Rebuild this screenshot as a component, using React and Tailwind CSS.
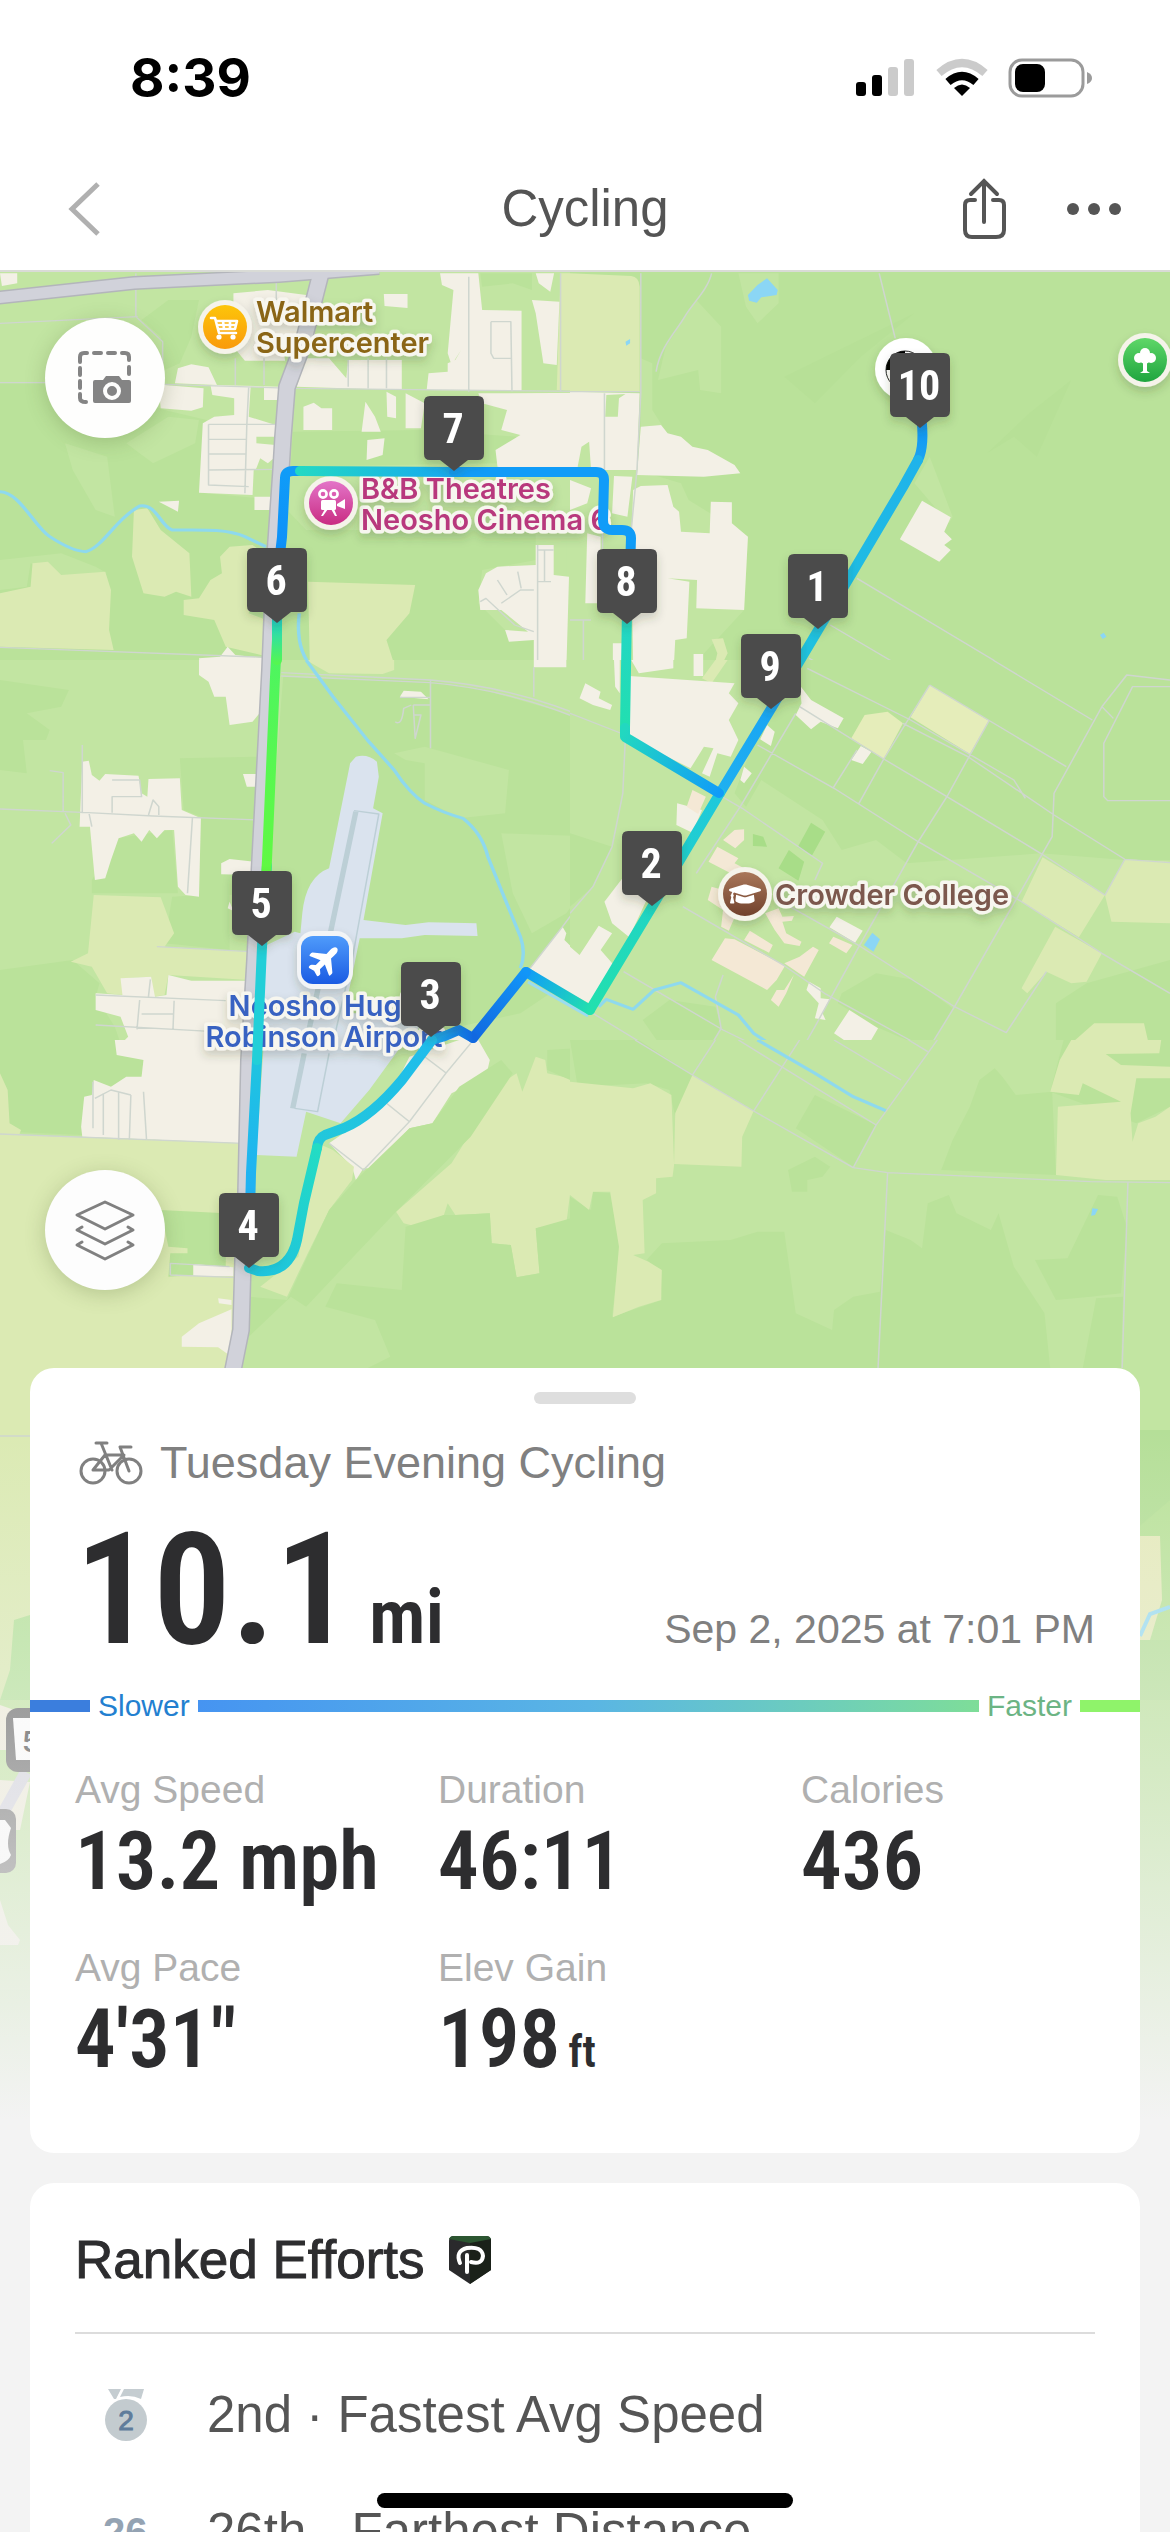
import { FaGraduationCap } from "react-icons/fa";
import { IoAirplane } from "react-icons/io5";

const NARROW = "font-['Roboto_Condensed','Arial_Narrow','Liberation_Sans',sans-serif]";

// Each tile covers 600x400 of the map and keeps its own 1568x1200 grid.
const tiles = [
  {
    x: 0,
    y: 270,
    base: "#c2e5a2",
    shapes: [
      ["#bae29a", "M0 340H240L430 420L540 450L525 668L725 690L800 780H1400V870L1260 900L1250 1000L1320 1080L1400 1110V1200H0Z"],
      ["#bae29a", "M765 485L1100 480L1350 500L1300 580L760 590ZM370 150L440 90L520 90L500 200L470 280L430 300L420 200ZM1255 10H1390V60L1340 40L1260 50Z"],
      ["#c2e5a2", "M170 520L280 560L300 740L250 720L190 600ZM440 440L520 450L510 520L400 580L330 520ZM0 870L160 850L250 890L280 910L160 920L80 880L70 950L0 960ZM1480 800H1568V1200H1480Z"],
      ["#dbeab3", "M0 970L80 950L85 880L125 875L160 915L275 905L290 960L285 1080L297 1140L0 1130ZM350 720L385 715L420 780L495 850L500 980L460 965L430 980L375 970L345 860ZM575 860L600 830L660 825L690 850L650 1030L720 1060L700 1160L590 1130L560 1050L480 1035V990L520 985L550 930L580 910ZM805 935L1085 945L1070 1030L1010 1110L1035 1200H810ZM1465 10H1568V365L1455 360Z"],
      ["#f3f0e6", "M0 10H45V40L5 48ZM610 70L700 60L800 75L830 100L820 220L740 230L745 272H640L610 230ZM457 340L465 295L500 283L545 292L567 345ZM415 355L430 345L532 355L530 412L500 422L420 415ZM550 345L730 350V390H690V350H655L650 440L720 465V500L670 500V520L720 525V560L700 580L680 565L670 595L663 600L660 675L520 668L530 460L560 440L612 435V385L555 375ZM665 680H720V720H665ZM415 695L468 692L465 725ZM793 410L820 398L840 415H868V480H793ZM955 395L980 440L995 485H945ZM960 510L1005 505L1000 555L958 570ZM775 350L800 265H860L905 325L910 270H1050V360ZM1003 72H1065V114L1005 108Z"],
      ["#f3f0e6", "M1150 10H1250L1260 120L1363 122V362L1115 360L1120 310L1170 305V280L1190 270L1205 240L1180 285L1170 250L1185 60L1155 45ZM1390 90L1462 95L1455 285L1420 280L1400 130ZM1400 10H1448L1438 65L1408 40ZM1060 370L1110 400L1100 475L1060 475ZM1250 370L1568 368V620L1540 590L1540 520L1510 560L1520 620L1300 590L1295 540L1360 495L1310 480L1325 420L1260 400ZM1010 365L1035 380V445L1012 440ZM1400 825H1447V915L1487 920L1480 1200H1395V1110L1330 1115L1320 1080L1380 1085L1310 1020L1255 1020L1250 960L1270 910L1300 890L1400 885ZM1545 785H1568V1000L1530 995ZM520 1165L575 1160L595 1130L615 1155L695 1165V1200H525Z"],
    ],
    roads: "M0 160L360 140M355 10V140L425 215V345M0 338H240M430 343L770 355L1568 365M545 463H727M545 463V645L650 650M543 508H645M543 552H645M545 600L720 598M645 465L640 670M650 350L645 465M1225 20V365M1283 155H1335L1338 365M1335 265H1290L1283 250V155M962 265V355M1010 265V355M910 270V350M615 265V345M690 265V345M1405 825V1200M1423 840V935M1405 840H1447M1405 935H1440M1310 1000L1360 960H1395M1300 930L1325 975M1353 905L1362 955M1255 995L1270 985L1345 1065L1395 1085M0 1132L695 1162M722 30V90M1465 10V365",
    river: "M0 665C50 665 90 770 130 800S200 845 225 845C270 830 300 750 365 708C410 700 420 770 450 780C520 780 590 775 640 800L695 830M782 1030C775 1100 785 1160 822 1200",
  },
  {
    x: 570,
    y: 270,
    base: "#bae29a",
    shapes: [
      ["#c2e5a2", "M185 265L215 280V420L240 465L185 470ZM250 230L330 90L395 170V370L340 360L335 300L230 330ZM440 10H545V100L490 160L460 110ZM0 600H175L290 640L310 690L465 800L455 1020L310 1200H0ZM900 640L940 560L1000 740L990 760Z"],
      ["#b7e097", "M1090 550L1200 430L1310 330L1220 560L1160 500ZM560 320L720 230L900 130L760 260L640 400Z"],
      ["#dbeab3", "M0 10L160 18Q180 20 182 50V365H0ZM370 1108L400 1105L412 1150L390 1200H375L385 1150Z"],
      ["#f3f0e6", "M0 365L182 370L175 600H90L0 595ZM185 470L238 465L255 490L290 500L320 530L360 540L430 585L445 610L350 620L175 615ZM115 618L163 620L150 740L110 730ZM0 630L55 655L45 700L0 720ZM185 648L255 645L270 710L285 725L290 785L365 790L368 695L423 697V760L465 800L455 1020L330 1015L332 930L255 925L312 935L305 1105L275 1110L272 1175H165L160 840L165 660ZM45 790L80 800V1000H40ZM920 692L995 742L978 785L998 808L978 825L995 840L965 875L862 808ZM323 1152H348V1200H323ZM112 1120H152V1200H112Z"],
      ["#c2e5a2", "M95 375L145 372L128 385L125 440H92ZM20 590L30 530L50 515L55 600Z"],
      ["#8bd6f5", "M465 75L490 45L515 25L543 60L540 75L500 82L488 98L468 92ZM145 215L157 207V220L147 227ZM1385 1095L1395 1088L1402 1100L1392 1107Z"],
    ],
    roads: "M185 10V370L175 600L160 780M370 10C360 60 320 100 300 140S235 230 225 305M808 10L850 205M750 925L1150 1200M680 1065L880 1200M0 365H182M90 370V600M625 1165L680 1200M35 1050V1200M0 1050H55M85 790V1000",
    river: "",
  },
  {
    x: 0,
    y: 660,
    base: "#c2e5a2",
    shapes: [
      ["#bae29a", "M740 50L1110 60L1250 85L1568 190V900L1360 1060L1000 1150L780 900L700 650ZM470 295L690 290L680 700L520 710L525 470L480 450ZM0 930L190 900L260 970L250 1010L300 1100L330 1200H0ZM305 535L450 510L465 700L240 700V660ZM450 710L600 700V870L430 850ZM0 60L180 90L160 140L70 160L130 210L120 240L60 240L70 340L0 330Z"],
      ["#c2e5a2", "M1030 280L1110 260L1330 330L1320 460L1200 475L1110 420V310L1060 300ZM1310 520L1568 530V620L1480 760L1390 820L1340 700Z"],
      ["#dbeab3", "M245 705L420 712L455 820L430 860L655 875L650 960L440 945L430 1005L400 1010L395 950L320 955L325 1005L280 1000L240 920L185 905L230 880ZM800 0H1030V30L1000 42L860 40L830 20Z"],
      ["#f3f0e6", "M520 0H695L685 150L660 185L600 195L590 110L560 110L545 65L520 45ZM215 305L232 302L240 345L260 362L275 342L362 347L370 400L385 410L388 357L470 355L475 450L525 475L520 710L485 705L465 680L455 510L430 510L410 535L390 510L370 545L350 520L310 535L290 600L275 655L248 660L235 500L208 500ZM635 342H675V380H645ZM578 610L600 597L665 605V645L578 643ZM600 725L595 745L610 753ZM250 1000L320 1005L315 955L395 950L405 1010L435 1005L440 945L500 962H655L645 1200H330L300 1170L335 1130L315 1070L250 1050ZM1045 110L1055 92L1100 95L1120 118ZM1568 90L1530 70L1515 110L1568 140ZM1395 0H1480V22H1395ZM1385 925L1470 800L1480 820L1475 840L1515 885L1568 800V1050L1530 1040ZM1190 1110L1250 1150L1280 1200H1080Z"],
      ["#dae3ee", "M930 290Q960 280 985 305L990 350L975 445L1000 460L950 780L1060 795L1120 787L1245 790L1248 828L1110 825L1050 835H940L900 1060H1110L1060 1200H660L670 870L770 815L785 820L790 760Q800 650 860 625L915 310Z"],
    ],
    roads: "M0 447L230 458L400 468L675 480M215 255V460M165 455V338L130 332M170 460L185 495L135 550M233 462L240 500M735 38L1125 60Q1350 80 1568 190M735 48L1125 68Q1350 90 1568 203M293 360H365L370 410H293V458M388 465L400 420L415 440V465M503 472L490 700M1125 60V265M1080 135H1125M1080 135L1085 235L1100 165H1080M1045 112H1125M1033 185Q1050 200 1055 145L1075 135M250 1005L590 1022M250 1095L560 1115M365 1020L358 1108M455 1022L452 1110M370 1062H455M393 958L388 1010M410 860L655 875M1395 22V110M1568 650L1470 800L1385 925",
    river: "M800 0L870 110L960 240L1030 330Q1070 400 1110 430Q1160 460 1210 475Q1260 520 1275 590L1310 690L1360 830Q1375 880 1360 925",
    runway: "M930 455L865 810L790 1200",
    taxiway: "M925 452L990 462L920 900L860 1200",
  },
  {
    x: 570,
    y: 660,
    base: "#c2e5a2",
    shapes: [
      ["#bae29a", "M560 0H1568V600H1450L1230 580L880 610L800 540L710 570L660 480L500 360L460 440L430 400ZM190 1080L260 1020L380 1040L395 1100L350 1200L250 1180ZM1270 1030L1350 970L1568 900V1200H1270ZM710 1000L800 940L900 960L1000 1045L940 1170L800 1100L700 1030ZM0 520L110 560L60 680L0 740Z"],
      ["#a8dd88", "M478 522L505 530L515 560L478 558ZM630 488L667 515L632 587L595 562ZM572 570L612 605L597 662L545 625Z"],
      ["#e5edba", "M940 75L1095 182L1045 282L890 172ZM770 165L830 155L870 190L820 297L735 235Z"],
      ["#dbeab3", "M1235 592L1398 705L1330 832L1180 725ZM1450 598L1568 605V790L1415 785L1398 705ZM1268 800L1390 880L1350 965L1310 970L1245 935L1195 1000L1180 985ZM1370 1090L1500 1090L1510 1140L1545 1150L1540 1180L1400 1185L1350 1200H1280L1290 1170L1330 1130ZM345 55L380 0H412L370 70Z"],
      ["#f3f0e6", "M155 48L430 70L415 100L440 130L415 180L440 240L420 290L385 280L365 350L345 340L375 265L350 260L315 325L150 230ZM160 0H270V25L180 40ZM323 0H348V48H323ZM40 70L80 95L75 115L110 135L105 150L60 135L25 115ZM600 75L630 120L715 175L700 205L655 185L630 208L590 165L605 130ZM515 195L535 215L525 258L497 238ZM735 300L760 258L788 275L765 312ZM455 320L475 340L455 370L445 360ZM280 430L345 450L320 518L278 495ZM90 725L140 650L200 720L155 832L110 790ZM0 860L25 885L75 797L110 820L80 870L112 912L50 1030L0 1000ZM697 770L765 812L745 848L678 802ZM730 1050L805 1105L767 1180L690 1120ZM625 965L655 985V1015L678 1018L660 1060L668 1080L640 1075L650 1030L618 990ZM115 0H130V100L118 80Z"],
      ["#f4e8d5", "M405 835L430 838L562 917L540 960L515 990L370 900ZM400 540L430 510L455 508V540L432 565ZM385 560L440 595L430 610L455 625L420 640L362 605ZM320 390L355 410L335 462L305 440ZM470 812L530 855L520 878L455 840ZM635 860L650 870L612 950L560 910L600 890ZM688 830L738 855L722 880L677 850ZM510 760L545 745L555 770L585 768L580 782L555 785L565 820L605 845L600 858L560 850L535 810ZM585 945L565 1000L545 1040L525 1020L540 990L560 990ZM370 680L400 690L435 760L415 812L395 800L400 750L360 720Z"],
      ["#8bd6f5", "M790 818L810 838L793 875L768 855Z"],
    ],
    roads: "M1105 0L1365 180M940 75L1297 320M620 25L890 180L1160 360L1190 415M870 190L1040 290L1265 465L1450 598L1568 608M600 140L820 297L985 410L1230 580L1398 705L1450 598M490 255L690 385L910 545L1180 725L1390 880L1568 1000M940 75L820 297L755 430M1095 182L985 410L910 545L755 860L640 1100L590 1200M590 160L445 440L330 640M750 270L687 385M1568 60L1455 45L1390 140L1265 400L1260 530L1130 790L1005 1040L930 1180M1568 80H1470L1395 250V410L1405 422H1568M1390 140L1420 175M295 740L560 917L665 1000L935 1170M560 730L760 860L1005 1040L1140 1118L1245 935M390 405L450 445L660 610L640 660M0 160L145 225L138 400L110 560L60 680L0 760M60 1060L260 1200M140 935L400 1110L560 1200M400 945L380 1010L395 1105L345 1200",
    river: "M75 1040L95 1018L165 1048L220 990L290 968L440 1065L480 1120L585 1200",
  },
  {
    x: 0,
    y: 1040,
    base: "#c2e5a2",
    shapes: [
      ["#bae29a", "M0 0H300L375 60L370 110L290 140L240 165L215 285L20 275L0 100Z"],
      ["#dbeab3", "M0 100L20 150L25 250L55 270L50 285L635 310L600 1200H0Z"],
      ["#bae29a", "M420 510L590 520V700L440 710L445 640L490 640L490 625L440 620Z"],
      ["#f3f0e6", "M300 0H645L635 310L215 290L212 260L220 170L240 165L245 120L290 140L330 110H370L375 60L305 45ZM505 672L610 682V708H505ZM475 890L520 850L605 808V950L570 922L475 920ZM570 775L605 780V795L572 790Z"],
      ["#dae3ee", "M690 0H1060L965 150L890 250L800 215L775 350L670 345Z"],
      ["#f3f0e6", "M1070 50L1200 0H1250L1280 60L1270 110L1180 160L1130 250L1070 265L980 385L950 385L930 420L920 380L860 310L1010 190Z"],
      ["#dbeab3", "M830 310L870 330L925 380L920 420L860 510L800 650L750 770L680 740L780 650ZM1350 100L1365 155L1380 110L1400 50L1425 60L1430 100L1568 135V465L1540 510L1510 470L1490 460L1480 550L1400 565L1410 700L1350 712L1335 615L1285 610L1280 520L1190 525L1170 490L1160 525L1090 560L1055 550L1035 515L1180 370L1310 130Z"],
      ["#bae29a", "M1310 60L1340 100L1230 290L1035 515L800 800L760 770L650 890V770L750 780L860 510L930 420L1070 265L1130 250L1200 140ZM1060 560L1160 525L1190 525L1280 520L1285 610L1335 615L1350 712L1410 700L1400 565L1568 510V985H960L1020 950L980 840L850 800L880 730L1050 750ZM1430 30L1568 20V130L1520 135L1430 90Z"],
    ],
    roads: "M0 282L635 310M243 125V265M270 160V285M310 155V300M342 165L338 300M248 175L290 150L342 165M375 155L383 300M1230 10L1165 100L1070 245L950 390L860 310M1110 50L1165 98M1010 190L1070 245M445 705L610 712M445 705V670L600 680M0 1188H80",
    river: "",
    runway: "M795 40L765 205",
    taxiway: "M860 40L830 215L770 205",
  },
  {
    x: 570,
    y: 1040,
    base: "#c2e5a2",
    shapes: [
      ["#bae29a", "M0 0H180L320 105L300 180L275 230L260 150L200 130L20 140ZM640 165L800 255L740 380L590 265ZM1110 85L1130 110L1165 165L1260 155L1270 405L970 390L1000 300L1045 200L1070 120ZM0 470L55 510L60 455L105 460L130 620L110 830L240 780L235 690L200 660L240 610L420 600L490 575H560L590 820L685 870L690 810L740 770L810 755L825 570L890 600L920 625L935 490L990 465L1010 520L1100 570L1120 520L1160 680L1240 820L1255 985H0ZM1215 660L1300 655L1380 465L1430 470L1455 560L1440 760L1360 770L1270 780ZM570 390L640 350L680 380L660 410L620 420L620 455L580 455ZM1375 775L1445 770L1440 985H1340Z"],
      ["#bae29a", "M1290 0H1568V200L1480 250L1255 155Z"],
      ["#dbeab3", "M0 125L165 145L210 130L265 165L272 375L268 410L225 415V460L190 480L195 640L165 645L205 665L240 690L238 780L180 800L112 832L128 620L105 455L60 455L50 510L0 465ZM320 105L480 213L450 290L448 380L272 372L275 220ZM1310 0H1545L1540 40L1400 42L1440 75L1568 80V115L1480 115L1465 220L1470 305L1485 250L1530 230L1568 200V420L1400 420L1270 405L1275 200L1440 185L1340 130L1330 165L1255 155L1280 60Z"],
      ["#8bd6f5", "M1365 505L1380 507L1372 525L1362 527Z"],
    ],
    roads: "M170 0L320 105L480 213L740 383L830 398L1360 425L1568 428M380 0L320 105M600 0L480 213M440 0L800 255M960 0L800 255L740 383M690 0L865 120M885 0L935 35M830 398L805 985M1458 428L1443 985",
    river: "M490 0L640 100L740 170L825 212",
  },
];

// path, gradient start, gradient end, colours
const routeSegments = [
  ["M921 415Q925 446 918 460", 921, 420, 918, 460, "#0f93f5", "#1ba4f0"],
  ["M918 460L903 487L842 590L786 684", 918, 460, 786, 684, "#1fb3ea", "#1fc4dd"],
  ["M786 684L720 793", 786, 684, 720, 793, "#18a2f5", "#1fb0f0"],
  ["M720 793L652 907L590 1010", 720, 793, 590, 1010, "#1fc8dc", "#22e0ae"],
  ["M590 1010L526 972", 590, 1010, 526, 972, "#22e0ae", "#109cf8"],
  ["M526 972L473 1038", 526, 972, 473, 1038, "#1296f8", "#1168e0"],
  ["M473 1038L459 1030L445 1036L432 1040", 473, 1038, 432, 1040, "#1168e0", "#1fb0ea"],
  ["M432 1040L402 1080Q372 1116 344 1128L325 1135Q318 1138 317 1148", 432, 1040, 317, 1148, "#1fbcec", "#22c8da"],
  ["M317 1148L304 1203L297 1240Q289 1274 258 1271L249 1268", 317, 1148, 249, 1268, "#23dcc4", "#1fc4dd"],
  ["M249 1250L251 1173L257 1060", 251, 1200, 257, 1060, "#1fb0f5", "#1fc4e0"],
  ["M257 1060L262 947L267 865", 257, 1060, 267, 865, "#22cfd8", "#22cfd8"],
  ["M263 930L267 860L275 677L277 640", 267, 930, 277, 640, "#66fa3a", "#4cf562"],
  ["M277 660L277 610", 277, 665, 277, 622, "#57f84c", "#22d6c4"],
  ["M277 580L282 537L285 478Q285 471 293 471L300 471", 277, 580, 290, 471, "#0c8cfa", "#109cf8"],
  ["M300 471L454 472", 300, 471, 454, 472, "#22d8c4", "#17a8f0"],
  ["M454 472L596 472Q604 472 604 480L603 520Q603 530 612 530L622 530Q631 530 631 538L630 570", 454, 472, 630, 570, "#109cf8", "#109cf8"],
  ["M627 610L625 728", 627, 615, 625, 728, "#23d6c6", "#22dfb0"],
  ["M625 728L625 737L719 793", 625, 730, 719, 793, "#22d8c0", "#109cf8"],
];

const mileMarkers = [
  { n: "10", x: 920, y: 353 },
  { n: "7", x: 454, y: 396 },
  { n: "6", x: 277, y: 548 },
  { n: "8", x: 627, y: 549 },
  { n: "1", x: 818, y: 554 },
  { n: "9", x: 771, y: 634 },
  { n: "2", x: 652, y: 831 },
  { n: "5", x: 262, y: 871 },
  { n: "3", x: 431, y: 962 },
  { n: "4", x: 249, y: 1193 },
];

const stats = [
  { label: "Avg Speed", value: "13.2 mph" },
  { label: "Duration", value: "46:11" },
  { label: "Calories", value: "436" },
  { label: "Avg Pace", value: "4'31\"" },
  { label: "Elev Gain", value: "198", unit: "ft" },
];

function MapTile({ tile }) {
  return (
    <svg x={tile.x} y={tile.y} width="600" height="400" viewBox="0 0 1568 1200" preserveAspectRatio="none">
      <rect width="1568" height="1200" fill={tile.base} />
      {tile.shapes.map(([fill, d], i) => (
        <path key={i} d={d} fill={fill} />
      ))}
      <g fill="none" strokeLinejoin="round">
        {tile.runway && <path d={tile.runway} stroke="#bccfd6" strokeWidth="14" />}
        {tile.taxiway && <path d={tile.taxiway} stroke="#bccfd6" strokeWidth="4" />}
        <path d={tile.roads} stroke="#cfd6cf" strokeWidth="4" />
        <path d={tile.river} stroke="#8ed9ee" strokeWidth="9" />
      </g>
    </svg>
  );
}

function PlaceLabel({ x, y, lines, fill, anchor = "start" }) {
  return (
    <g
      className="font-['Inter',sans-serif] text-[29px] font-semibold"
      fill={fill}
      stroke="#f7f6ef"
      strokeWidth="7"
      strokeLinejoin="round"
      paintOrder="stroke"
      textAnchor={anchor}
      filter="url(#soft)"
    >
      {lines.map((line, i) => (
        <text key={line} x={x} y={y + i * 31}>
          {line}
        </text>
      ))}
    </g>
  );
}

function PlacePin({ x, y, fill, children }) {
  return (
    <g>
      <circle cx={x} cy={y} r="27" fill="#f5f3ea" filter="url(#soft)" />
      <circle cx={x} cy={y} r="22" fill={fill} />
      {children}
    </g>
  );
}

function RouteMap() {
  return (
    <svg
      className="absolute inset-x-0 top-0 h-[1920px] w-full"
      viewBox="0 272 1170 1920"
      preserveAspectRatio="xMidYMin slice"
      role="img"
      aria-label="Route map"
    >
      <defs>
        <filter id="soft" x="-30%" y="-30%" width="160%" height="180%">
          <feDropShadow dx="0" dy="5" stdDeviation="5" floodColor="#33401f" floodOpacity="0.22" />
        </filter>
        <linearGradient id="yellow" x2="0" y2="1">
          <stop stopColor="#fdc50a" />
          <stop offset="1" stopColor="#f99a0c" />
        </linearGradient>
        <linearGradient id="pink" x2="0" y2="1">
          <stop stopColor="#e374c8" />
          <stop offset="1" stopColor="#c92c82" />
        </linearGradient>
        <linearGradient id="brown" x2="0" y2="1">
          <stop stopColor="#a9775a" />
          <stop offset="1" stopColor="#71412c" />
        </linearGradient>
        <linearGradient id="park" x2="0" y2="1">
          <stop stopColor="#5fd768" />
          <stop offset="1" stopColor="#1fa53f" />
        </linearGradient>
        <linearGradient id="sky" x2="0" y2="1">
          <stop stopColor="#4f9bfb" />
          <stop offset="1" stopColor="#1a5be3" />
        </linearGradient>
        <linearGradient id="fade" gradientUnits="userSpaceOnUse" x1="0" y1="1430" x2="0" y2="2120">
          <stop stopColor="#f3f3f3" stopOpacity="0" />
          <stop offset="0.5" stopColor="#f3f3f3" stopOpacity="0.48" />
          <stop offset="1" stopColor="#f3f3f3" />
        </linearGradient>
        {routeSegments.map(([, x1, y1, x2, y2, from, to], i) => (
          <linearGradient key={i} id={`seg${i}`} gradientUnits="userSpaceOnUse" x1={x1} y1={y1} x2={x2} y2={y2}>
            <stop stopColor={from} />
            <stop offset="1" stopColor={to} />
          </linearGradient>
        ))}
      </defs>

      <rect y="272" width="1170" height="1920" fill="#bae29a" />
      {tiles.map((tile, i) => (
        <MapTile key={i} tile={tile} />
      ))}

      {/* land south of the last row of tiles */}
      <path d="M0 1440H40V1700H0Z" fill="#dbeab3" />
      <path d="M14 1620L30 1615V1700L8 1740L0 1700L10 1670Z" fill="#b5e29a" />
      <path d="M0 1700H40V1990H0Z" fill="#c2e5a2" />
      <path d="M0 1705L20 1712L8 1750H0ZM0 1780L30 1782L20 1830H0ZM0 1900L8 1925L20 1940L18 1945H0Z" fill="#f0edda" />
      <path d="M1135 1430H1170V1500L1135 1530ZM1135 1640H1170V1700H1135Z" fill="#b5df98" />
      <path d="M1135 1536L1160 1536L1162 1600L1150 1640H1135Z" fill="#e5eabb" />
      <path d="M1140 1636L1150 1614L1170 1607" fill="none" stroke="#9bdcf0" strokeWidth="4" />
      <path d="M26 1772L-2 1822" stroke="#d4d4de" strokeWidth="12" />

      <g fill="none" strokeLinejoin="round">
        <path d="M-5 298L134 283L279 276L379 268" stroke="#b3b5bb" strokeWidth="14" />
        <path d="M323 265L302 347L287 387L283 437L281 470L274 570L270 670L260 860L255 960L249 1060L246 1193L243 1260L241 1330L232 1375" stroke="#b3b5bb" strokeWidth="18" />
        <path d="M-5 298L134 283L279 276L379 268" stroke="#d1d2da" strokeWidth="11" />
        <path d="M323 265L302 347L287 387L283 437L281 470L274 570L270 670L260 860L255 960L249 1060L246 1193L243 1260L241 1330L232 1375" stroke="#d1d2da" strokeWidth="15" />
        <path d="M528 982L588 1016" stroke="#9bdcf0" strokeWidth="3" />
      </g>

      {/* highway shields */}
      <rect x="6" y="1708" width="60" height="64" rx="12" fill="#686868" />
      <path d="M13 1718L50 1718V1760H16Z" fill="#fff" />
      <text x="22" y="1752" className="font-['Inter',sans-serif] text-[28px] font-semibold" fill="#444">
        59
      </text>
      <rect x="-40" y="1809" width="56" height="64" rx="10" fill="#6c6c6c" />
      <path d="M-10 1820H5L11 1828Q5 1845 11 1855Q8 1864 -10 1866Z" fill="#fff" />

      <PlaceLabel x={256} y={322} lines={["Walmart", "Supercenter"]} fill="#8a6516" />
      <PlaceLabel x={361} y={499} lines={["B&B Theatres", "Neosho Cinema 6"]} fill="#b8397d" />
      <PlaceLabel x={324} y={1016} lines={["Neosho Hugh", "Robinson Airport"]} fill="#3862c2" anchor="middle" />
      <PlaceLabel x={775} y={905} lines={["Crowder College"]} fill="#7b584d" />

      <PlacePin x={225} y={327} fill="url(#yellow)">
        <g fill="none" stroke="#fff" strokeWidth="2.6" strokeLinecap="round" strokeLinejoin="round">
          <path d="M211 318H215L219 333H236M217 321H237L235 329H219M223 321L224 329M230 321V329M217 325H236" />
        </g>
        <circle cx="219" cy="337" r="2.6" fill="#fff" />
        <circle cx="233" cy="337" r="2.6" fill="#fff" />
      </PlacePin>

      <PlacePin x={331} y={503} fill="url(#pink)">
        <g fill="#fff">
          <rect x="321" y="500" width="15" height="10" rx="1.5" />
          <path d="M337 504L345 499V509L337 506ZM325 509L321 516H323L328 509ZM331 509L335 516H337L334 509Z" />
        </g>
        <circle cx="323" cy="494" r="3.6" fill="none" stroke="#fff" strokeWidth="2.6" />
        <circle cx="334" cy="494" r="3.6" fill="none" stroke="#fff" strokeWidth="2.6" />
      </PlacePin>

      <PlacePin x={745} y={894} fill="url(#brown)">
        <FaGraduationCap x="729" y="878" size="32" color="#fff" />
      </PlacePin>

      <PlacePin x={1145} y={360} fill="url(#park)">
        <g fill="#fff">
          <circle cx="1145" cy="353" r="5" />
          <circle cx="1139" cy="358" r="5" />
          <circle cx="1151" cy="358" r="5" />
          <circle cx="1145" cy="359" r="5" />
          <path d="M1143 360H1147L1147 371L1150 373H1140L1143 371Z" />
        </g>
      </PlacePin>

      <rect x="297" y="931" width="56" height="58" rx="17" fill="#f2f4f6" filter="url(#soft)" />
      <rect x="301" y="936" width="48" height="48" rx="12" fill="url(#sky)" />
      <g transform="rotate(-45 325 960)">
        <IoAirplane x="307" y="942" size="36" color="#fff" />
      </g>

      <g fill="none" strokeWidth="10" strokeLinecap="round" strokeLinejoin="round">
        {routeSegments.map(([d], i) => (
          <path key={i} d={d} stroke={`url(#seg${i})`} />
        ))}
      </g>

      {/* start / finish flag */}
      <circle cx="906" cy="369" r="31" fill="#fff" filter="url(#soft)" />
      <circle cx="905" cy="370" r="19" fill="none" stroke="#222" />
      <path d="M905 370H886A19 19 0 0 1 905 351Z" />

      {mileMarkers.map((m) => (
        <g key={m.n} filter="url(#soft)">
          <path
            d={`M${m.x - 24} ${m.y}h48q6 0 6 6v52q0 6 -6 6h-10l-14 11l-14 -11h-10q-6 0 -6 -6v-52q0 -6 6 -6z`}
            fill="#4c4c4c"
          />
          <text x={m.x - 1} y={m.y + 47} textAnchor="middle" fill="#fff" className={`${NARROW} text-[42px] font-bold`}>
            {m.n}
          </text>
        </g>
      ))}

      <rect y="1430" width="1170" height="762" fill="url(#fade)" />
    </svg>
  );
}

function StatusBar() {
  return (
    <div className="flex h-[156px] items-center justify-between bg-white pr-[78px] pl-[130px] text-black">
      <time className="font-['Inter',sans-serif] text-[53px] leading-none font-bold">8:39</time>
      <svg width="236" height="40" viewBox="856 58 236 40" aria-hidden="true">
        <rect x="856" y="82" width="10" height="14" rx="3" />
        <rect x="872" y="75" width="10" height="21" rx="3" />
        <rect x="888" y="67" width="10" height="29" rx="3" fill="#cbcbcb" />
        <rect x="904" y="59" width="10" height="37" rx="3" fill="#cbcbcb" />
        <g fill="none" strokeWidth="8">
          <path d="M939 73Q962 53 985 73" stroke="#cbcbcb" />
          <path d="M948 82Q962 70 976 82" stroke="#000" />
        </g>
        <path d="M962 96L954 88Q962 81 970 88Z" />
        <rect x="1010" y="60" width="73" height="36" rx="12" fill="none" stroke="#9b9b9b" strokeWidth="3" />
        <rect x="1015" y="64" width="30" height="28" rx="8" />
        <path d="M1087 72Q1092 74 1092 78T1087 84Z" fill="#9b9b9b" />
      </svg>
    </div>
  );
}

function Header() {
  return (
    <header className="grid h-[116px] grid-cols-[1fr_auto_1fr] items-center border-b-2 border-[#d9dbd6] bg-white px-12 pb-2">
      <button type="button" aria-label="Back" className="justify-self-start pl-4">
        <svg width="36" height="60" viewBox="0 0 36 60" fill="none" stroke="#b0b0b0" strokeWidth="5">
          <path d="M34 5L8 30L34 55" />
        </svg>
      </button>
      <h1 className="text-[51px] leading-[60px] text-[#545454]">Cycling</h1>
      <div className="flex items-center gap-[58px] justify-self-end">
        <button type="button" aria-label="Share">
          <svg width="48" height="64" viewBox="960 175 48 64" fill="none" stroke="#555" strokeWidth="4" strokeLinecap="round">
            <path d="M984 220V179M971 192L984 179L997 192" />
            <path d="M975 198H970Q965 198 965 203V228Q965 235 972 235H996Q1004 235 1004 228V203Q1004 198 999 198H993" />
          </svg>
        </button>
        <button type="button" aria-label="More">
          <svg width="56" height="14" viewBox="0 0 56 14" fill="#555">
            <circle cx="7" cy="7" r="6" />
            <circle cx="28" cy="7" r="6" />
            <circle cx="49" cy="7" r="6" />
          </svg>
        </button>
      </div>
    </header>
  );
}

function SpeedScale() {
  return (
    <div className="mt-5 flex items-center text-[30px] leading-9">
      <div className="h-3 w-[60px] bg-[#3b7edd]" />
      <span className="px-2 text-[#2380d0]">Slower</span>
      <div className="h-3 flex-1 bg-linear-to-r from-[#4694f1] via-[#5ab5e4] to-[#7edd98]" />
      <span className="px-2 text-[#6cb484]">Faster</span>
      <div className="h-3 w-[60px] bg-[#8ff36a]" />
    </div>
  );
}

function BikeIcon() {
  return (
    <svg width="66" height="44" viewBox="0 0 66 44" fill="none" stroke="#808080" strokeWidth="3" strokeLinecap="round" strokeLinejoin="round">
      <circle cx="15" cy="30" r="12" />
      <circle cx="51" cy="30" r="12" />
      <path d="M18 2H29M23 2L34 29M15 29L27 14H46L31 29H15M51 30L42 6H53" />
    </svg>
  );
}

function SummaryCard() {
  return (
    <section className="rounded-3xl bg-white pt-6 pb-[71px]">
      <div className="mx-auto h-3 w-[102px] rounded-md bg-[#dedede]" />
      <div className="mt-[33px] flex items-center gap-4 px-12 text-[45px] leading-[52px] text-[#808080]">
        <BikeIcon />
        <h2>Tuesday Evening Cycling</h2>
      </div>
      <div className="mt-6 flex h-[155px] items-baseline justify-between px-[45px] leading-none">
        <p className={`${NARROW} text-[155px] leading-[155px] font-semibold text-[#2d2d2f]`}>
          10.1<span className="ml-4 text-[76px] leading-none">mi</span>
        </p>
        <time className="text-[41px] leading-none text-[#808080]">Sep 2, 2025 at 7:01 PM</time>
      </div>
      <SpeedScale />
      <dl className="mt-11 grid grid-cols-3 gap-x-[69px] gap-y-[42px] px-[45px]">
        {stats.map((s) => (
          <div key={s.label} className="whitespace-nowrap">
            <dt className="text-[39px] leading-11 text-[#b0b0b0]">{s.label}</dt>
            <dd className={`${NARROW} mt-2 h-[84px] text-[81px] leading-[84px] font-semibold text-[#2d2d2f]`}>
              {s.value}
              {s.unit && <span className="ml-2 text-[44px] leading-none">{s.unit}</span>}
            </dd>
          </div>
        ))}
      </dl>
    </section>
  );
}

function PremiumBadge() {
  return (
    <svg width="42" height="48" viewBox="0 0 42 48" aria-label="Premium">
      <path d="M5 0H37Q42 0 42 5V34L21 48L0 34V5Q0 0 5 0Z" fill="#2a2a2c" />
      <path d="M21 6L42 3V34L21 48Z" fill="#1a2119" />
      <path d="M5 0H37Q41 0 42 3L21 7L0 3Q1 0 5 0Z" fill="#2c5631" />
      <path d="M18 36V19M11 27Q6 15 18 12Q33 10 34 20Q33 29 22 26" fill="none" stroke="#fff" strokeWidth="4" strokeLinecap="round" />
    </svg>
  );
}

function Medal() {
  return (
    <svg width="42" height="52" viewBox="0 0 42 52">
      <path d="M3 0H16L11 10H9ZM19 0H39L36 10Q26 5 15 8Z" fill="#c5cdd1" />
      <circle cx="21" cy="31" r="21" fill="#c3cbcf" />
      <text x="21" y="41" textAnchor="middle" className="text-[28px]" fill="#5f7c9b" stroke="#5f7c9b">
        2
      </text>
    </svg>
  );
}

function RankedEfforts() {
  return (
    <section className="rounded-t-3xl bg-white px-[45px] pt-[47px]">
      <div className="flex items-center gap-6 border-b-2 border-[#dcdcdc] pb-[42px]">
        <h2 className="text-[53px] leading-[60px] text-[#2d2d2f] [-webkit-text-stroke:1px_#2d2d2f]">Ranked Efforts</h2>
        <PremiumBadge />
      </div>
      <ul className="pt-[22px] text-[51px] leading-[60px] text-[#555]">
        <li className="flex h-[117px] items-center">
          <div className="flex w-[132px] pl-[30px]">
            <Medal />
          </div>
          2nd · Fastest Avg Speed
        </li>
        <li className="flex h-[117px] items-center">
          <div className="w-[132px] pl-7 text-[40px] font-bold text-[#94a3b3]">26</div>
          26th · Farthest Distance
        </li>
      </ul>
    </section>
  );
}

export default function App() {
  return (
    <div className="relative flex h-screen flex-col overflow-hidden bg-[#f3f3f3] font-['Liberation_Sans',Arial,sans-serif]">
      <StatusBar />
      <Header />
      <main className="relative min-h-0 flex-1 overflow-hidden">
        <RouteMap />
        <div className="relative">
          <div className="flex h-[1096px] flex-col justify-between px-[45px] pt-[46px] pb-[78px]">
            <button
              type="button"
              aria-label="Save map image"
              className="flex size-[120px] items-center justify-center rounded-full bg-[#fefefd] shadow-[0_4px_20px_rgba(70,90,40,0.25)]"
            >
              <svg width="54" height="54" viewBox="0 0 54 54">
                <path d="M2 11V6Q2 2 6 2H9M16 2H23M30 2H37M44 2H47Q51 2 51 6V9M51 16V23M2 17V24M2 30V37M2 43V47Q2 51 8 51" fill="none" stroke="#848484" strokeWidth="4" strokeLinecap="round" />
                <path d="M17 29H25L28 25H41L44 29H51Q53 29 53 31V50Q53 52 51 52H17Q15 52 15 50V31Q15 29 17 29Z" fill="#848484" />
                <circle cx="34" cy="40" r="7" fill="none" stroke="#fefefd" strokeWidth="4" />
              </svg>
            </button>
            <button
              type="button"
              aria-label="Map layers"
              className="flex size-[120px] items-center justify-center rounded-full bg-[#fdfdfd] shadow-[0_4px_20px_rgba(70,90,40,0.25)]"
            >
              <svg width="62" height="62" viewBox="0 0 62 62" fill="none" stroke="#808080" strokeWidth="3" strokeLinecap="round" strokeLinejoin="round">
                <path d="M31 3L59 16L31 30L3 16Z" />
                <path d="M8 28L3 31L31 45L59 31L54 28" />
                <path d="M8 43L3 46L31 60L59 46L54 43" />
              </svg>
            </button>
          </div>
          <div className="flex flex-col gap-[30px] px-[30px]">
            <SummaryCard />
            <RankedEfforts />
          </div>
        </div>
      </main>
      <div className="absolute inset-x-0 bottom-6 mx-auto h-[15px] w-[416px] rounded-full bg-black" />
    </div>
  );
}
